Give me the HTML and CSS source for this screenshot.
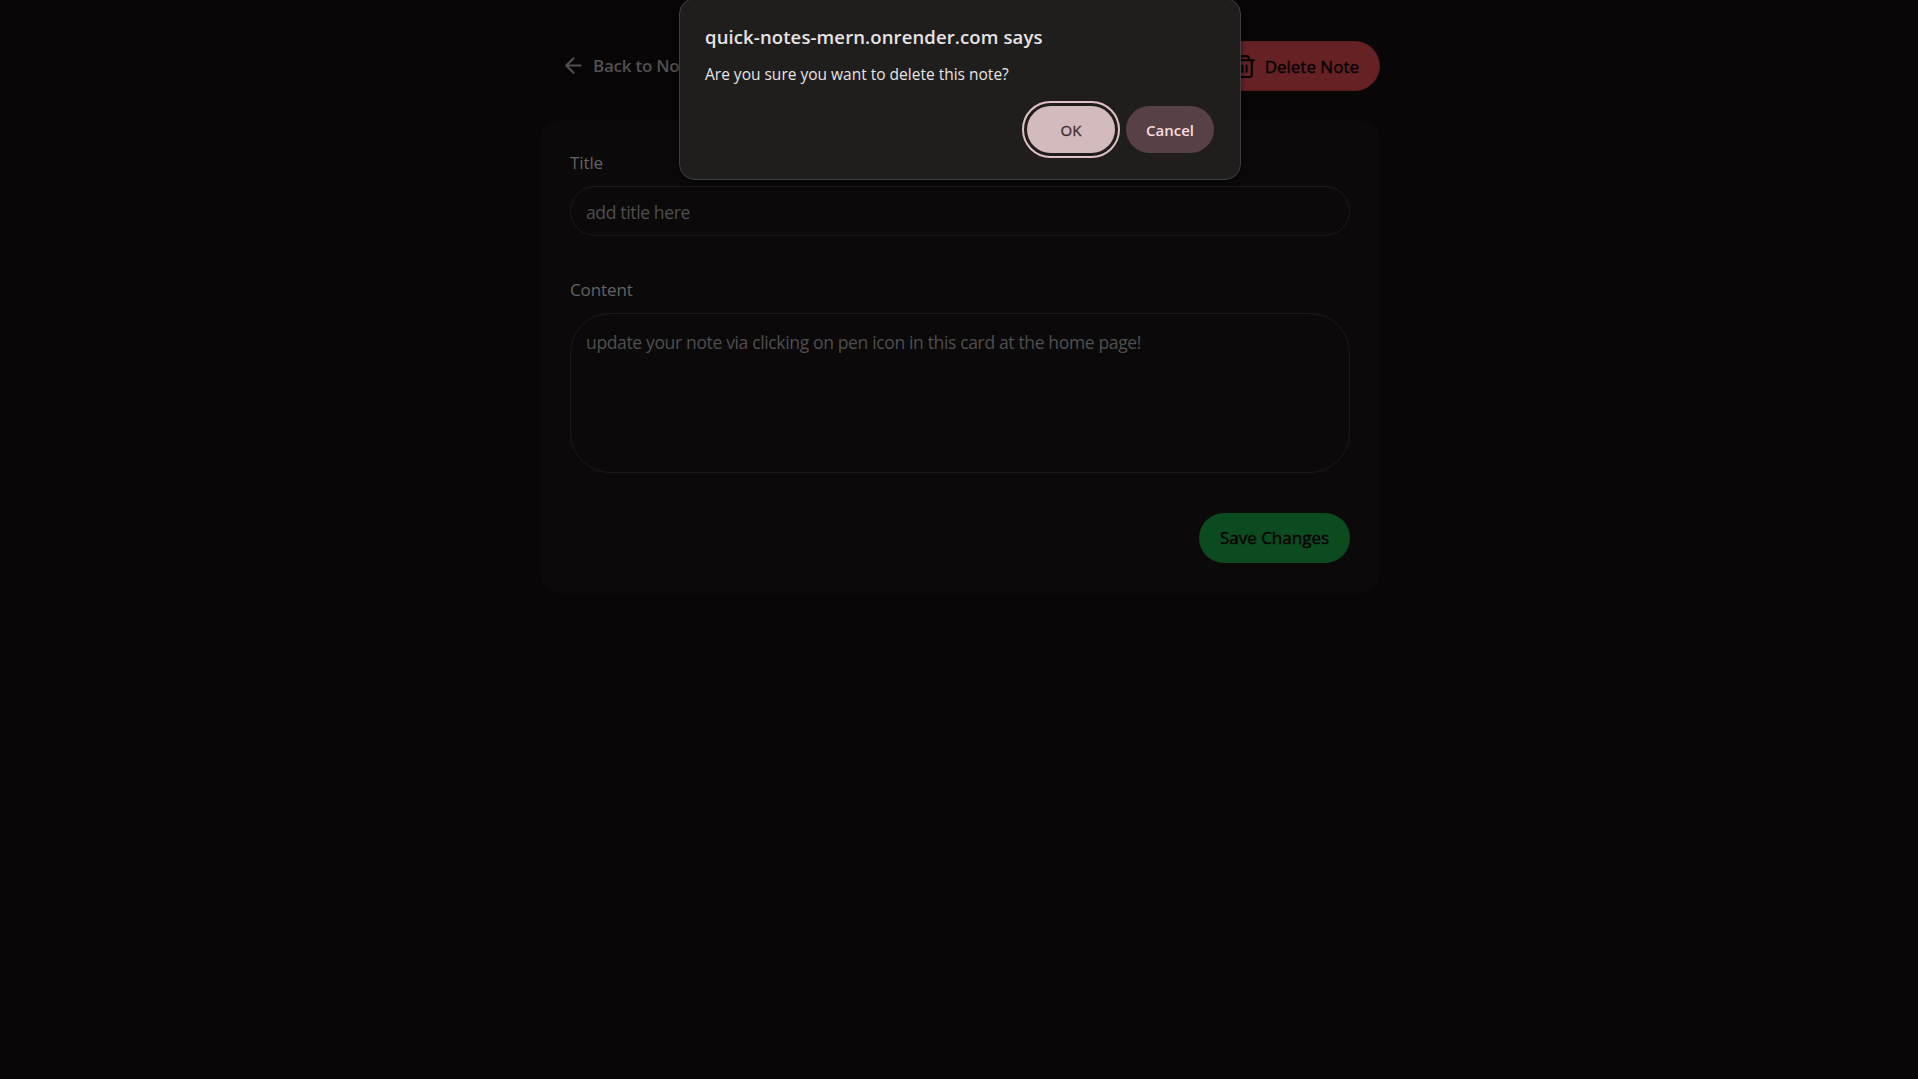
FILE: index.html
```html
<!DOCTYPE html>
<html lang="en">
<head>
<meta charset="utf-8">
<title>Quick Notes</title>
<link rel="stylesheet" href="styles.css">
</head>
<body>
<main class="page">
  <header class="toolbar">
    <a class="back">
      <svg class="back-icon" viewBox="0 0 24 24"><path d="m12 19-7-7 7-7M19 12H5"/></svg>
      <span>Back to Notes</span>
    </a>
    <button class="btn delete">
      <svg class="trash-icon" viewBox="0 0 24 24"><path d="M3 6h18M19 6v14c0 1-1 2-2 2H7c-1 0-2-1-2-2V6M8 6V4c0-1 1-2 2-2h4c1 0 2 1 2 2v2M10 11v6M14 11v6"/></svg>
      <span class="delete-label">Delete Note</span>
    </button>
  </header>
  <section class="card">
    <div class="label title-label"><span>Title</span></div>
    <div class="field input"><span class="title-value">add title here</span></div>
    <div class="label content-label"><span>Content</span></div>
    <div class="field textarea"><span class="content-value">update your note via clicking on pen icon in this card at the home page!</span></div>
    <div class="actions"><button class="btn save"><span class="save-label">Save Changes</span></button></div>
  </section>
</main>
<div class="dialog" role="alertdialog">
  <div class="dialog-title"><span>quick-notes-mern.onrender.com says</span></div>
  <div class="dialog-text"><span>Are you sure you want to delete this note?</span></div>
  <div class="dialog-actions">
    <button class="dialog-btn ok">OK</button>
    <button class="dialog-btn cancel">Cancel</button>
  </div>
</div>
</body>
</html>
```
FILE: styles.css
```css
* { box-sizing: border-box; }
body {
  margin: 0;
  min-height: 1079px;
  background: #080607;
  color: #626061;
  font-family: "Open Sans", "Noto Sans", sans-serif;
  font-size: 17.5px;
  white-space: nowrap;
  overflow: hidden;
}
button { border: 0; padding: 0; font-family: inherit; white-space: nowrap; }
.page { width: 840px; margin-left: 540px; padding-top: 41px; }
.toolbar { display: flex; justify-content: space-between; height: 50px; }
.back {
  display: flex;
  align-items: center;
  gap: 8px;
  padding: 0 0 2px 21px;
  color: #525051;
  font-size: 17px;
  font-weight: 600;
  letter-spacing: -0.25px;
}
.back-icon, .trash-icon {
  flex: none;
  width: 25px;
  height: 25px;
  fill: none;
  stroke: currentColor;
  stroke-width: 2;
  stroke-linecap: round;
  stroke-linejoin: round;
}
.back-icon { margin-right: -1px; }
.btn {
  display: flex;
  align-items: center;
  justify-content: center;
  height: 50px;
  border-radius: 25px;
  color: #020001;
  font-size: 17px;
  font-weight: 500;
  -webkit-text-stroke: 0.35px currentColor;
}
.delete { justify-content: flex-end; width: 190px; gap: 8px; background: #662124; border: 1px solid #581d20; padding: 1px 20px 0 0; }
.delete-label { padding-bottom: 1px; }
.card {
  margin-top: 29px;
  height: 473px;
  padding: 30px;
  border-radius: 20px;
  background: #0b090a;
}
.label { height: 36px; line-height: 26px; color: #646263; font-size: 17px; letter-spacing: -0.1px; }
.content-label { margin-top: 41px; line-height: 25px; }
.field {
  border: 1px solid #1b191a;
  padding: 0 15px;
  color: #504e4f;
  line-height: 50px;
  letter-spacing: -0.35px;
}
.input { height: 50px; border-radius: 25px; }
.textarea { height: 160px; border-radius: 40px; padding-top: 3px; }
.actions { display: flex; justify-content: flex-end; margin-top: 40px; }
.save { width: 151px; background: #0c4a20; padding-bottom: 2px; }
.dialog {
  position: absolute;
  left: 679px;
  top: -2px;
  width: 562px;
  height: 182px;
  padding: 24px 25px 0;
  border: 1px solid #414040;
  border-radius: 16px;
  background: #1f1e1c;
  color: #e8e3e4;
  box-shadow: 0 2px 6px rgba(0, 0, 0, 0.5);
}
.dialog-title { height: 36px; line-height: 27px; font-size: 18.5px; font-weight: 600; letter-spacing: 0.12px; }
.dialog-text { height: 47px; line-height: 30px; font-size: 15.5px; }
.dialog-actions { display: flex; justify-content: flex-end; gap: 11px; padding-right: 1px; }
.dialog-btn { width: 88px; height: 47px; border-radius: 24px; font-size: 15px; font-weight: 600; }
.ok { background: #d3babd; color: #3d2c30; outline: 2px solid #e1c2c7; outline-offset: 3px; font-weight: 500; -webkit-text-stroke: 0.3px currentColor; }
.cancel { background: #584144; color: #f7dce1; }
```
